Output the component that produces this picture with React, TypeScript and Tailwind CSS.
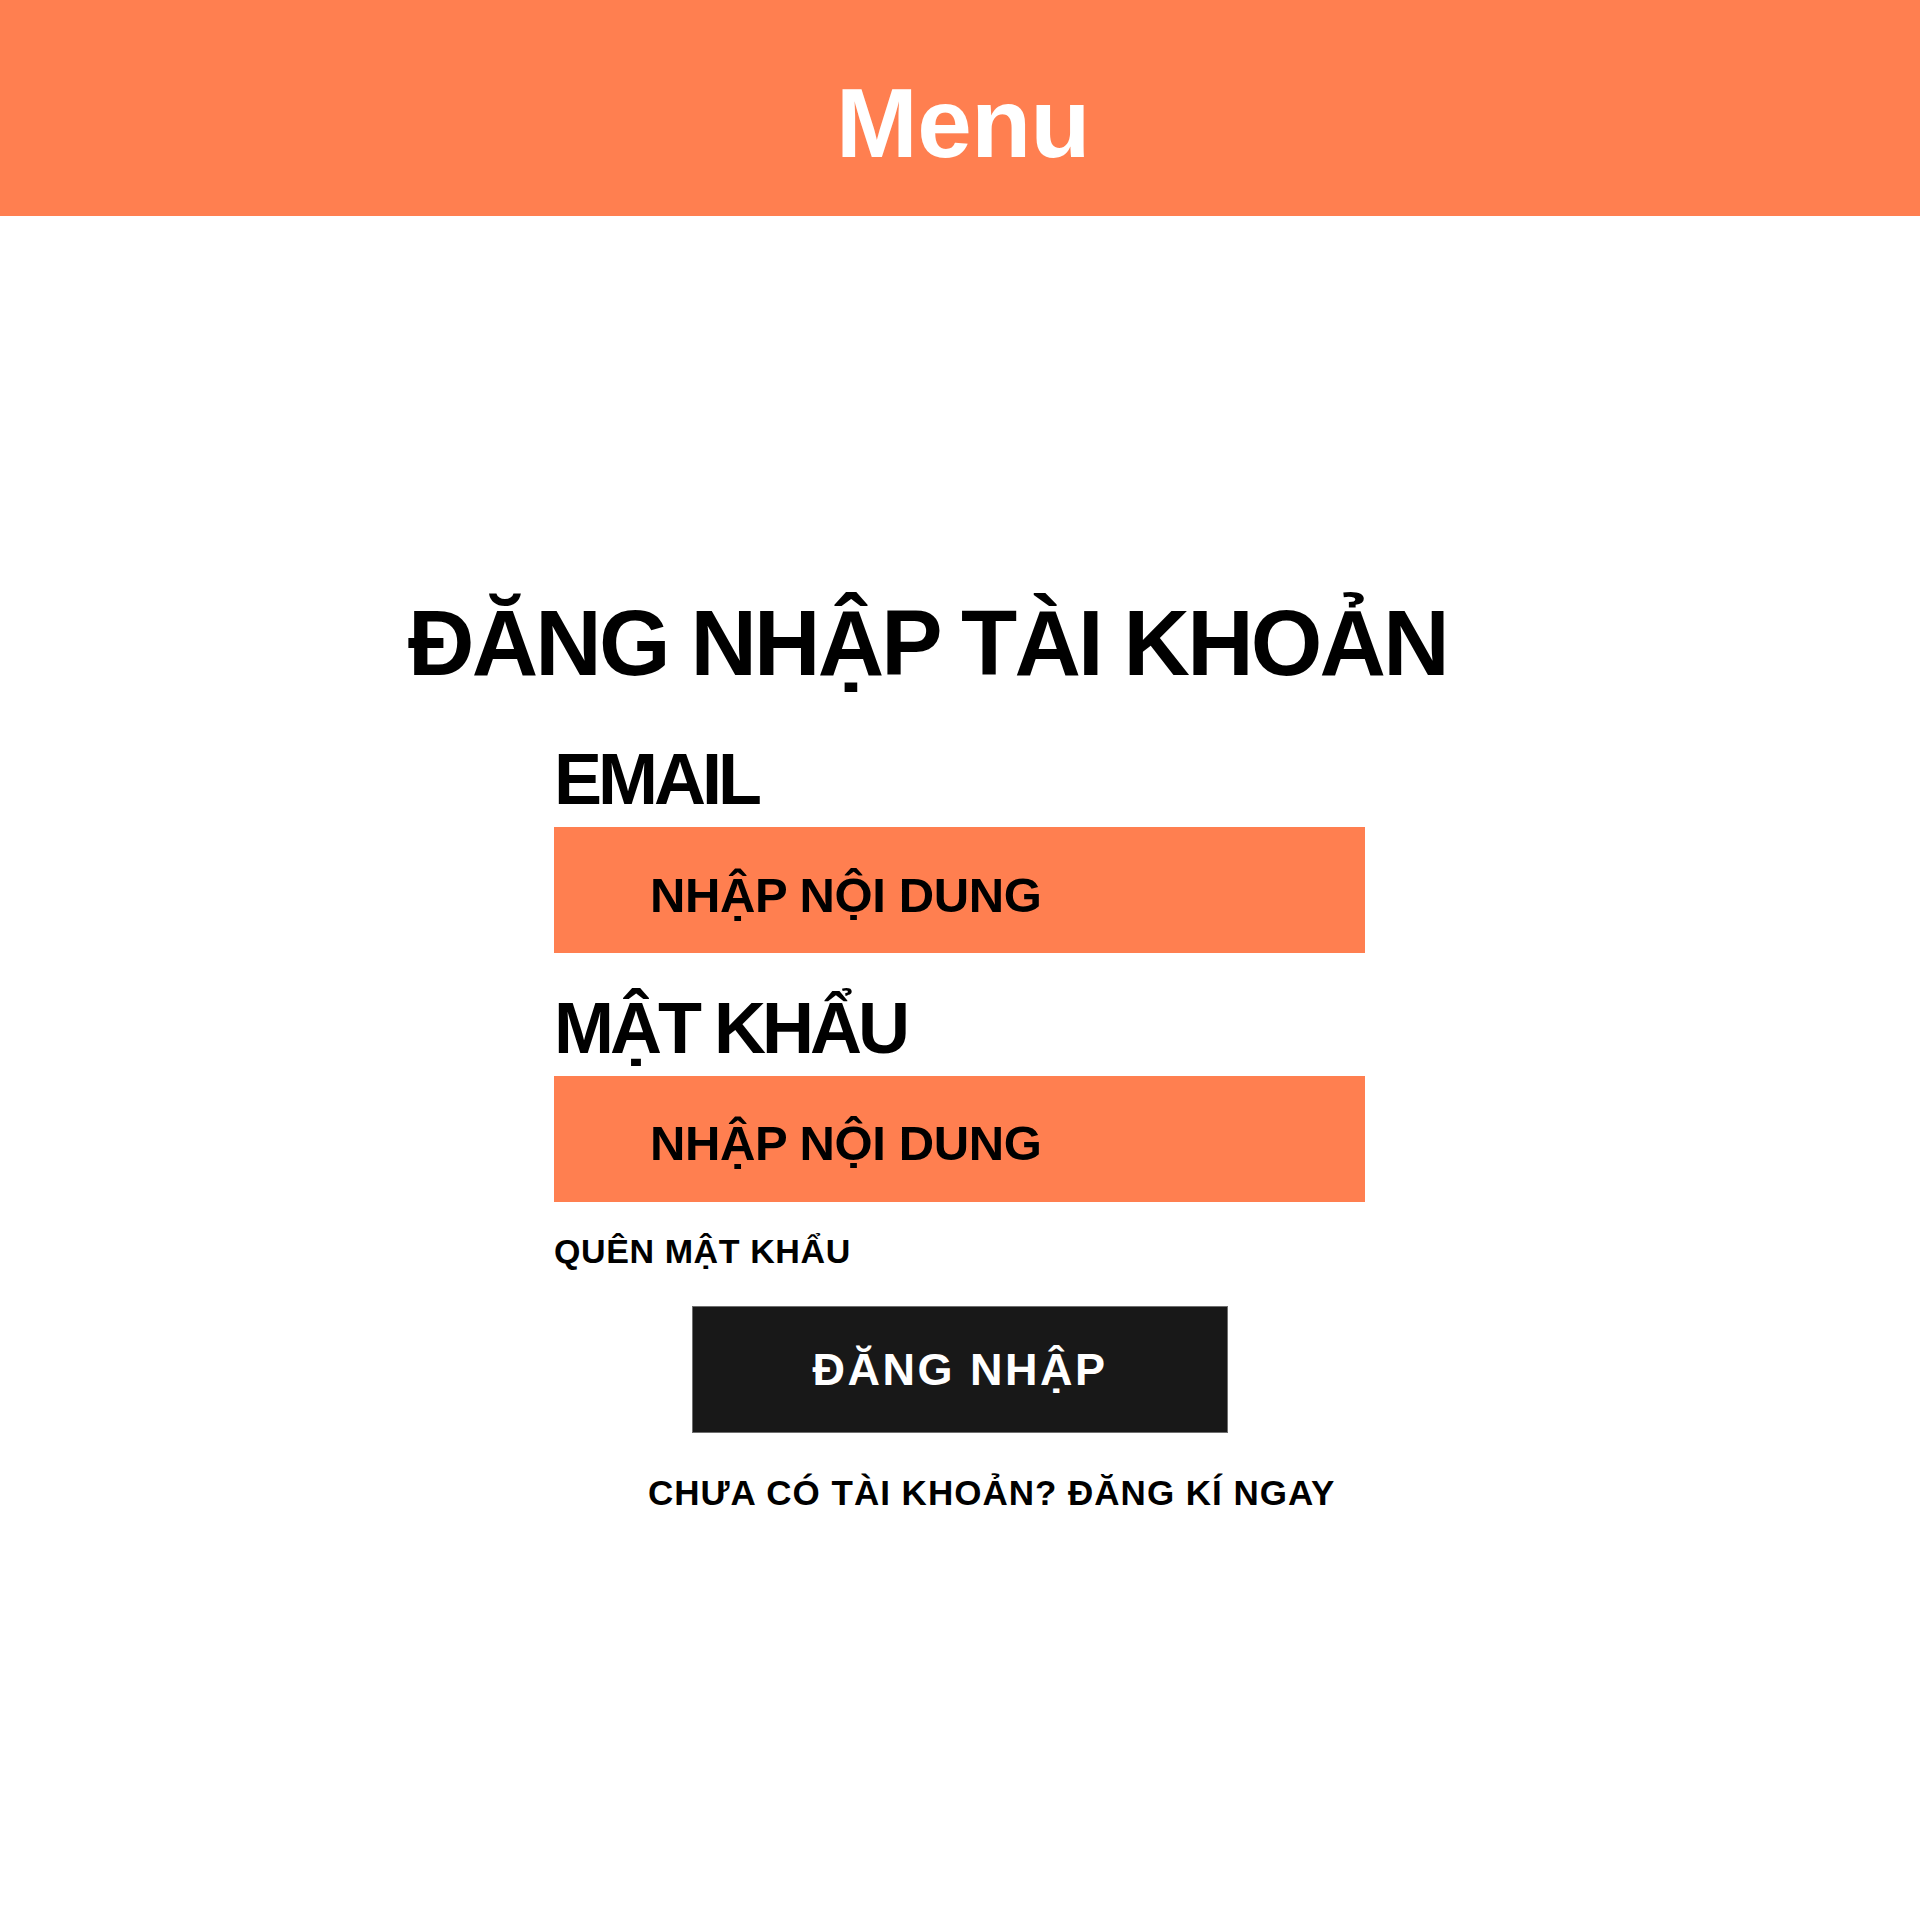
import React from "react";

const font = { fontFamily: '"Liberation Sans", Arial, sans-serif' };

export default function App() {
  return (
    <div className="min-h-[1906px] w-full bg-white text-black" style={font}>
      <header className="flex h-[216px] w-full justify-center bg-[#ff7f50] pt-[74px]">
        <h1 className="ml-[6px] text-[98px] font-semibold leading-none tracking-[-0.5px] text-white">Menu</h1>
      </header>

      <main className="flex flex-col">
        <h2 className="mt-[381px] pl-[408px] text-[92px] font-bold leading-none tracking-[-2.8px] whitespace-nowrap">
          ĐĂNG NHẬP TÀI KHOẢN
        </h2>

        <form className="ml-[554px] flex w-[811px] flex-col" onSubmit={(e) => e.preventDefault()}>
          <label className="mt-[54px] text-[72px] font-bold leading-none tracking-[-4px]">EMAIL</label>
          <div className="mt-[12px] h-[126px] w-full bg-[#ff7f50] pl-[96px] pt-[44px]">
            <span className="block text-[49px] font-bold leading-none tracking-[-0.4px]">NHẬP NỘI DUNG</span>
          </div>

          <label className="mt-[39px] text-[72px] font-bold leading-none tracking-[-4px]">MẬT KHẨU</label>
          <div className="mt-[12px] h-[126px] w-full bg-[#ff7f50] pl-[96px] pt-[43px]">
            <span className="block text-[49px] font-bold leading-none tracking-[-0.4px]">NHẬP NỘI DUNG</span>
          </div>

          <a className="mt-[32px] text-[34px] font-bold leading-none tracking-[0.6px]">QUÊN MẬT KHẨU</a>

          <button
            type="submit"
            className="ml-[138px] mt-[38px] flex h-[127px] w-[536px] items-center justify-center border border-[#6e6e6e] bg-[#181818] text-[45px] font-bold leading-none tracking-[2.5px] text-white"
          >
            ĐĂNG NHẬP
          </button>

          <p className="ml-[94px] mt-[42px] text-[35px] font-bold leading-none tracking-[1px] whitespace-nowrap">
            CHƯA CÓ TÀI KHOẢN? ĐĂNG KÍ NGAY
          </p>
        </form>
      </main>
    </div>
  );
}
